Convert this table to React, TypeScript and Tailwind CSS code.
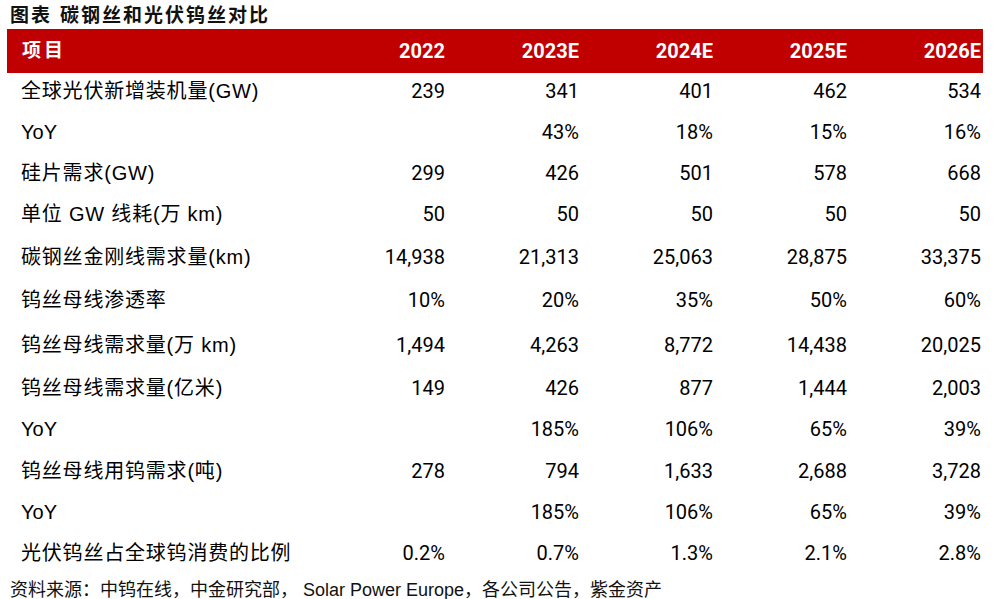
import React from 'react'

const COLS = ['2022', '2023E', '2024E', '2025E', '2026E']

const ROWS: { label: string; values: string[]; h: string; latin?: boolean }[] = [
  { label: '全球光伏新增装机量(GW)', values: ['239', '341', '401', '462', '534'], h: 'h-[38px] pb-[3px]' },
  { label: 'YoY', values: ['', '43%', '18%', '15%', '16%'], h: 'h-[41px]', latin: true },
  { label: '硅片需求(GW)', values: ['299', '426', '501', '578', '668'], h: 'h-[41px]' },
  { label: '单位 GW 线耗(万 km)', values: ['50', '50', '50', '50', '50'], h: 'h-[42px]' },
  { label: '碳钢丝金刚线需求量(km)', values: ['14,938', '21,313', '25,063', '28,875', '33,375'], h: 'h-[43px]' },
  { label: '钨丝母线渗透率', values: ['10%', '20%', '35%', '50%', '60%'], h: 'h-[44px]' },
  { label: '钨丝母线需求量(万 km)', values: ['1,494', '4,263', '8,772', '14,438', '20,025'], h: 'h-[44px] pt-[2px]' },
  { label: '钨丝母线需求量(亿米)', values: ['149', '426', '877', '1,444', '2,003'], h: 'h-[42px] pt-[2px]' },
  { label: 'YoY', values: ['', '185%', '106%', '65%', '39%'], h: 'h-[42px]', latin: true },
  { label: '钨丝母线用钨需求(吨)', values: ['278', '794', '1,633', '2,688', '3,728'], h: 'h-[41px] pt-[1px]' },
  { label: 'YoY', values: ['', '185%', '106%', '65%', '39%'], h: 'h-[41px]', latin: true },
  { label: '光伏钨丝占全球钨消费的比例', values: ['0.2%', '0.7%', '1.3%', '2.1%', '2.8%'], h: 'h-[41px] pt-[1px]' },
]

const cjk = "font-['Liberation_Sans','Noto_Sans_CJK_SC',sans-serif]"
const num = "font-['Roboto','Liberation_Sans',sans-serif]"

export default function App() {
  return (
    <div className="h-[599px] w-[996px] overflow-hidden bg-white text-black">
      {/* Title */}
      <div className={`flex h-[29px] items-center pl-[10px] pt-[2px] text-[19px] font-bold leading-none tracking-[2px] text-[#111] ${cjk}`}>
        <span>图表</span>
        <span className="ml-[8px]">碳钢丝和光伏钨丝对比</span>
      </div>

      <div className="ml-[7px] w-[976px]">
        {/* Header */}
        <div className="grid h-[44px] grid-cols-[306px_repeat(5,134px)] items-center bg-[#c00000] text-white">
          <div className={`pl-[15px] text-[19px] font-bold tracking-[3px] ${cjk}`}>项目</div>
          {COLS.map(c => (
            <div key={c} className={`pr-[2px] text-right text-[20px] font-bold ${num}`}>{c}</div>
          ))}
        </div>

        {/* Body */}
        {ROWS.map((r, i) => (
          <div key={i} className={`grid grid-cols-[306px_repeat(5,134px)] items-center ${r.h}`}>
            <div
              className={`pl-[14px] text-[20px] leading-none ${cjk} ${r.latin ? '' : 'tracking-[0.8px]'}`}
            >
              {r.label}
            </div>
            {r.values.map((v, j) => (
              <div key={j} className={`pr-[2px] text-right text-[20px] leading-none ${num}`}>{v}</div>
            ))}
          </div>
        ))}
      </div>

      {/* Source */}
      <div className={`pl-[10px] pt-[6px] text-[18px] leading-[22px] text-[#111] ${cjk}`}>
        资料来源：中钨在线，中金研究部， Solar Power Europe，各公司公告，紫金资产
      </div>
    </div>
  )
}
